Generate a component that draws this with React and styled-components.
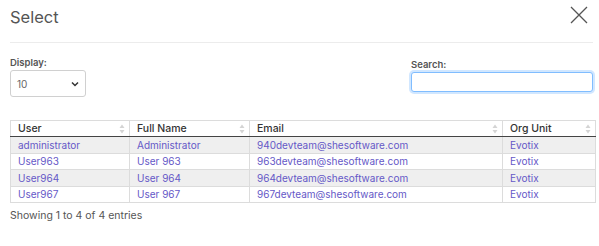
import React from "react";
import styled, { createGlobalStyle } from "styled-components";

const rows = [
  { user: "administrator", name: "Administrator", email: "940devteam@shesoftware.com", org: "Evotix" },
  { user: "User963", name: "User 963", email: "963devteam@shesoftware.com", org: "Evotix" },
  { user: "User964", name: "User 964", email: "964devteam@shesoftware.com", org: "Evotix" },
  { user: "User967", name: "User 967", email: "967devteam@shesoftware.com", org: "Evotix" },
];

const columns = [
  { label: "User", width: 119 },
  { label: "Full Name", width: 120 },
  { label: "Email", width: 253 },
  { label: "Org Unit", width: 93 },
];

const SortIcon = () => (
  <svg width="6" height="10" viewBox="0 0 6 10">
    <path d="M3 0.5 L5.5 4 L0.5 4 Z" fill="#d4d4d4" />
    <path d="M3 9.5 L5.5 6 L0.5 6 Z" fill="#d4d4d4" />
  </svg>
);

const App = () => {
  return (
    <>
      <GlobalStyle />
      <Modal>
        <Header>
          <Title>Select</Title>
          <Close aria-label="close">
            <svg width="18" height="18" viewBox="0 0 18 18">
              <path d="M1 1 L17 17 M17 1 L1 17" stroke="#555" strokeWidth="1.3" />
            </svg>
          </Close>
        </Header>
        <Controls>
          <Field>
            <Label>Display:</Label>
            <SelectBox>
              <span>10</span>
              <svg width="8" height="6" viewBox="0 0 8 6">
                <path d="M1 1.5 L4 4.5 L7 1.5" stroke="#333" strokeWidth="1.5" fill="none" />
              </svg>
            </SelectBox>
          </Field>
          <Field>
            <Label>Search:</Label>
            <SearchInput />
          </Field>
        </Controls>
        <Table>
          <colgroup>
            {columns.map((c) => (
              <col key={c.label} style={{ width: c.width }} />
            ))}
          </colgroup>
          <thead>
            <tr>
              {columns.map((c) => (
                <Th key={c.label}>
                  <ThInner>
                    {c.label}
                    <SortIcon />
                  </ThInner>
                </Th>
              ))}
            </tr>
          </thead>
          <tbody>
            {rows.map((r, i) => (
              <Tr key={r.user} striped={i % 2 === 0}>
                <Td>{r.user}</Td>
                <Td>{r.name}</Td>
                <Td>{r.email}</Td>
                <Td>{r.org}</Td>
              </Tr>
            ))}
          </tbody>
        </Table>
        <Info>Showing 1 to 4 of 4 entries</Info>
      </Modal>
    </>
  );
};

const GlobalStyle = createGlobalStyle`
  body {
    margin: 0;
    background: #fff;
    font-family: "Inter", "Liberation Sans", sans-serif;
  }
`;

const Modal = styled.div`
  width: 599px;
  padding: 0 4px 0 10px;
  box-sizing: border-box;
`;

const Header = styled.div`
  display: flex;
  justify-content: space-between;
  align-items: center;
  height: 33px;
  margin-right: 2px;
  border-bottom: 1px solid #ececec;
  padding-bottom: 9px;
`;

const Title = styled.div`
  font-size: 16.5px;
  color: #555;
  padding-top: 1px;
`;

const Close = styled.div`
  display: flex;
  margin-right: 5px;
  margin-top: -3px;
`;

const Controls = styled.div`
  display: flex;
  justify-content: space-between;
  align-items: flex-end;
  margin-top: 14px;
  margin-right: 2px;
`;

const Field = styled.div`
  display: flex;
  flex-direction: column;
`;

const Label = styled.div`
  font-size: 9.5px;
  font-weight: 600;
  color: #555;
  margin-bottom: 2px;
`;

const SelectBox = styled.div`
  width: 76px;
  height: 27px;
  box-sizing: border-box;
  border: 1px solid #d0d0d0;
  border-radius: 3px;
  display: flex;
  align-items: center;
  justify-content: space-between;
  padding: 0 6px 0 6px;
  font-size: 10px;
  color: #666;
  margin-bottom: -4px;
`;

const SearchInput = styled.input`
  width: 182px;
  height: 20px;
  box-sizing: border-box;
  border: 1px solid #80bdff;
  border-radius: 3px;
  box-shadow: 0 0 0 2px rgba(0, 123, 255, 0.18);
  outline: none;
  margin-bottom: 1px;
`;

const Table = styled.table`
  margin-top: 27px;
  width: 585px;
  border-collapse: collapse;
  table-layout: fixed;
  border: 1px solid #dcdcdc;
`;

const Th = styled.th`
  text-align: left;
  font-size: 10.5px;
  font-weight: 500;
  color: #333;
  height: 15px;
  padding: 0 4px 0 7px;
  border-left: 1px solid #dcdcdc;
  border-bottom: 1.5px solid #444;
`;

const ThInner = styled.div`
  display: flex;
  justify-content: space-between;
  align-items: center;
`;

const Tr = styled.tr`
  background: ${(props) => (props.striped ? "#efefef" : "#fff")};
`;

const Td = styled.td`
  font-size: 10px;
  color: #6558c7;
  height: 15.5px;
  padding: 0 7px;
  border: 1px solid #dcdcdc;
  white-space: nowrap;
`;

const Info = styled.div`
  margin-top: 6px;
  font-size: 10.5px;
  color: #555;
`;

export default App;
